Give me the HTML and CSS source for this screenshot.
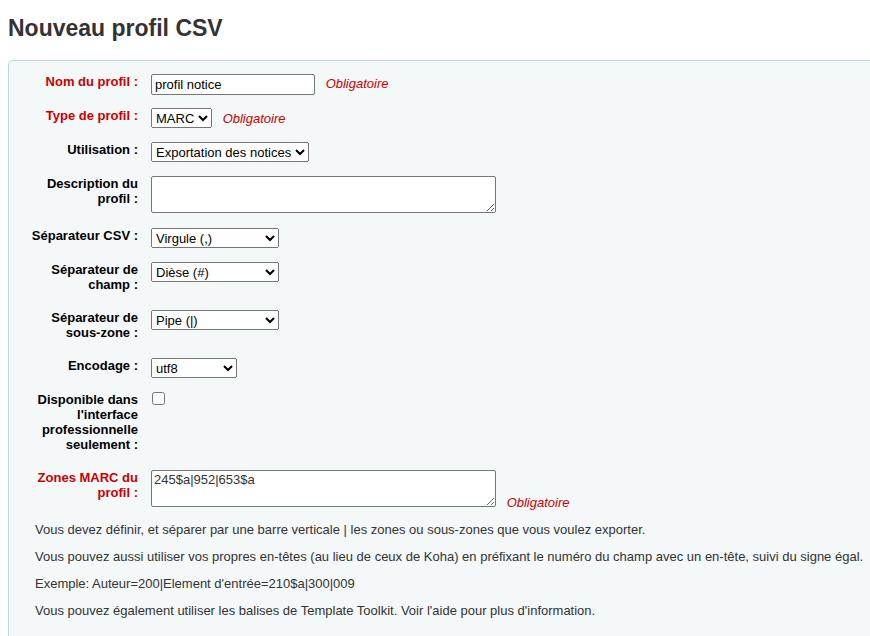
FILE: index.html
```html
<!DOCTYPE html>
<html lang="fr">
<head>
    <meta charset="UTF-8">
    <meta name="viewport" content="width=device-width, initial-scale=1.0">
    <title>Nouveau profil CSV</title>
    <link rel="stylesheet" href="styles.css">
</head>
<body>
    <h1 class="page-title">Nouveau profil CSV</h1>
    <form id="csv-profile-form" action="/cgi-bin/koha/tools/csv-profiles.pl" method="post">
        <fieldset class="rows">
            <div class="row">
                <label for="profile" class="required">Nom du profil :</label>
                <div class="field">
                    <input type="text" id="profile" name="profile" class="input-text" value="profil notice">
                    <span class="required">Obligatoire</span>
                </div>
            </div>
            <div class="row">
                <label for="type" class="required">Type de profil :</label>
                <div class="field">
                    <select id="type" name="type" class="select-field">
                        <option>MARC</option>
                        <option>SQL</option>
                    </select>
                    <span class="required">Obligatoire</span>
                </div>
            </div>
            <div class="row">
                <label for="used_for">Utilisation :</label>
                <div class="field">
                    <select id="used_for" name="used_for" class="select-field">
                        <option>Exportation des notices</option>
                    </select>
                </div>
            </div>
            <div class="row">
                <label for="description">Description du profil :</label>
                <div class="field">
                    <textarea id="description" name="description" class="textarea-field"></textarea>
                </div>
            </div>
            <div class="row">
                <label for="csv_separator">Séparateur CSV :</label>
                <div class="field">
                    <select id="csv_separator" name="csv_separator" class="select-field select-wide">
                        <option>Virgule (,)</option>
                    </select>
                </div>
            </div>
            <div class="row">
                <label for="field_separator">Séparateur de champ :</label>
                <div class="field">
                    <select id="field_separator" name="field_separator" class="select-field select-wide">
                        <option>Dièse (#)</option>
                    </select>
                </div>
            </div>
            <div class="row">
                <label for="subfield_separator">Séparateur de sous-zone :</label>
                <div class="field">
                    <select id="subfield_separator" name="subfield_separator" class="select-field select-wide">
                        <option>Pipe (|)</option>
                    </select>
                </div>
            </div>
            <div class="row">
                <label for="encoding">Encodage :</label>
                <div class="field">
                    <select id="encoding" name="encoding" class="select-field select-small">
                        <option>utf8</option>
                    </select>
                </div>
            </div>
            <div class="row">
                <label for="staff_only">Disponible dans l'interface professionnelle seulement :</label>
                <div class="field">
                    <input type="checkbox" id="staff_only" name="staff_only" class="checkbox-field">
                </div>
            </div>
            <div class="row">
                <label for="marc_content" class="required">Zones MARC du profil :</label>
                <div class="field">
                    <textarea id="marc_content" name="marc_content" class="textarea-field">245$a|952|653$a</textarea>
                    <span class="required">Obligatoire</span>
                </div>
            </div>
            <div class="hint">
                <p>Vous devez définir, et séparer par une barre verticale | les zones ou sous-zones que vous voulez exporter.</p>
                <p>Vous pouvez aussi utiliser vos propres en-têtes (au lieu de ceux de Koha) en préfixant le numéro du champ avec un en-tête, suivi du signe égal.</p>
                <p>Exemple: Auteur=200|Element d'entrée=210$a|300|009</p>
                <p>Vous pouvez également utiliser les balises de Template Toolkit. Voir l'aide pour plus d'information.</p>
            </div>
        </fieldset>
    </form>
</body>
</html>
```

FILE: styles.css
```css
html {
    overflow: hidden;
}
body {
    font-family: "Liberation Sans", Arial, sans-serif;
    font-size: 13px;
    color: #000;
    background-color: #fff;
    margin: 0;
    padding: 0 0 0 8px;
}
.page-title {
    font-size: 23px;
    line-height: 26px;
    font-weight: bold;
    color: #333;
    margin: 15px 0 19px;
}
form {
    margin: 0;
}
.rows {
    margin: 0 -30px 0 0;
    padding: 13px 12px 40px;
    border: 1px solid #b9d8d9;
    border-radius: 5px;
    background-color: #f4f8f9;
}
.row {
    display: flex;
    align-items: flex-start;
    margin-bottom: 12px;
}
.row label {
    flex: 0 0 117px;
    width: 117px;
    margin-right: 13px;
    padding-bottom: 6px;
    text-align: right;
    font-weight: bold;
    line-height: 15px;
}
.row label.required {
    color: #c00;
}
.field {
    line-height: 15px;
    min-height: 22px;
}
span.required {
    color: #c00;
    font-style: italic;
    margin-left: 7px;
}
.input-text {
    font-family: "Liberation Sans", Arial, sans-serif;
    font-size: 13px;
    color: #000;
    width: 164px;
    height: 21px;
    padding: 1px 3px;
    border: 1px solid #767676;
    border-radius: 2px;
    box-sizing: border-box;
    margin: 0;
    vertical-align: middle;
}
.select-field {
    font-family: "Liberation Sans", Arial, sans-serif;
    font-size: 13px;
    color: #000;
    height: 20px;
    margin: 0;
    box-sizing: border-box;
}
.select-wide {
    width: 128px;
}
.select-small {
    width: 86px;
}
.textarea-field {
    font-family: "Liberation Sans", Arial, sans-serif;
    font-size: 13px;
    color: #333;
    width: 345px;
    height: 37px;
    padding: 1px 2px;
    margin: 0;
    border: 1px solid #767676;
    border-radius: 2px;
    box-sizing: border-box;
    vertical-align: baseline;
}
.checkbox-field {
    width: 13px;
    height: 13px;
    margin: 0 0 0 1px;
}
.hint {
    padding-left: 14px;
    color: #333;
}
.hint p {
    margin: 0 0 12px;
    line-height: 15px;
}
```
